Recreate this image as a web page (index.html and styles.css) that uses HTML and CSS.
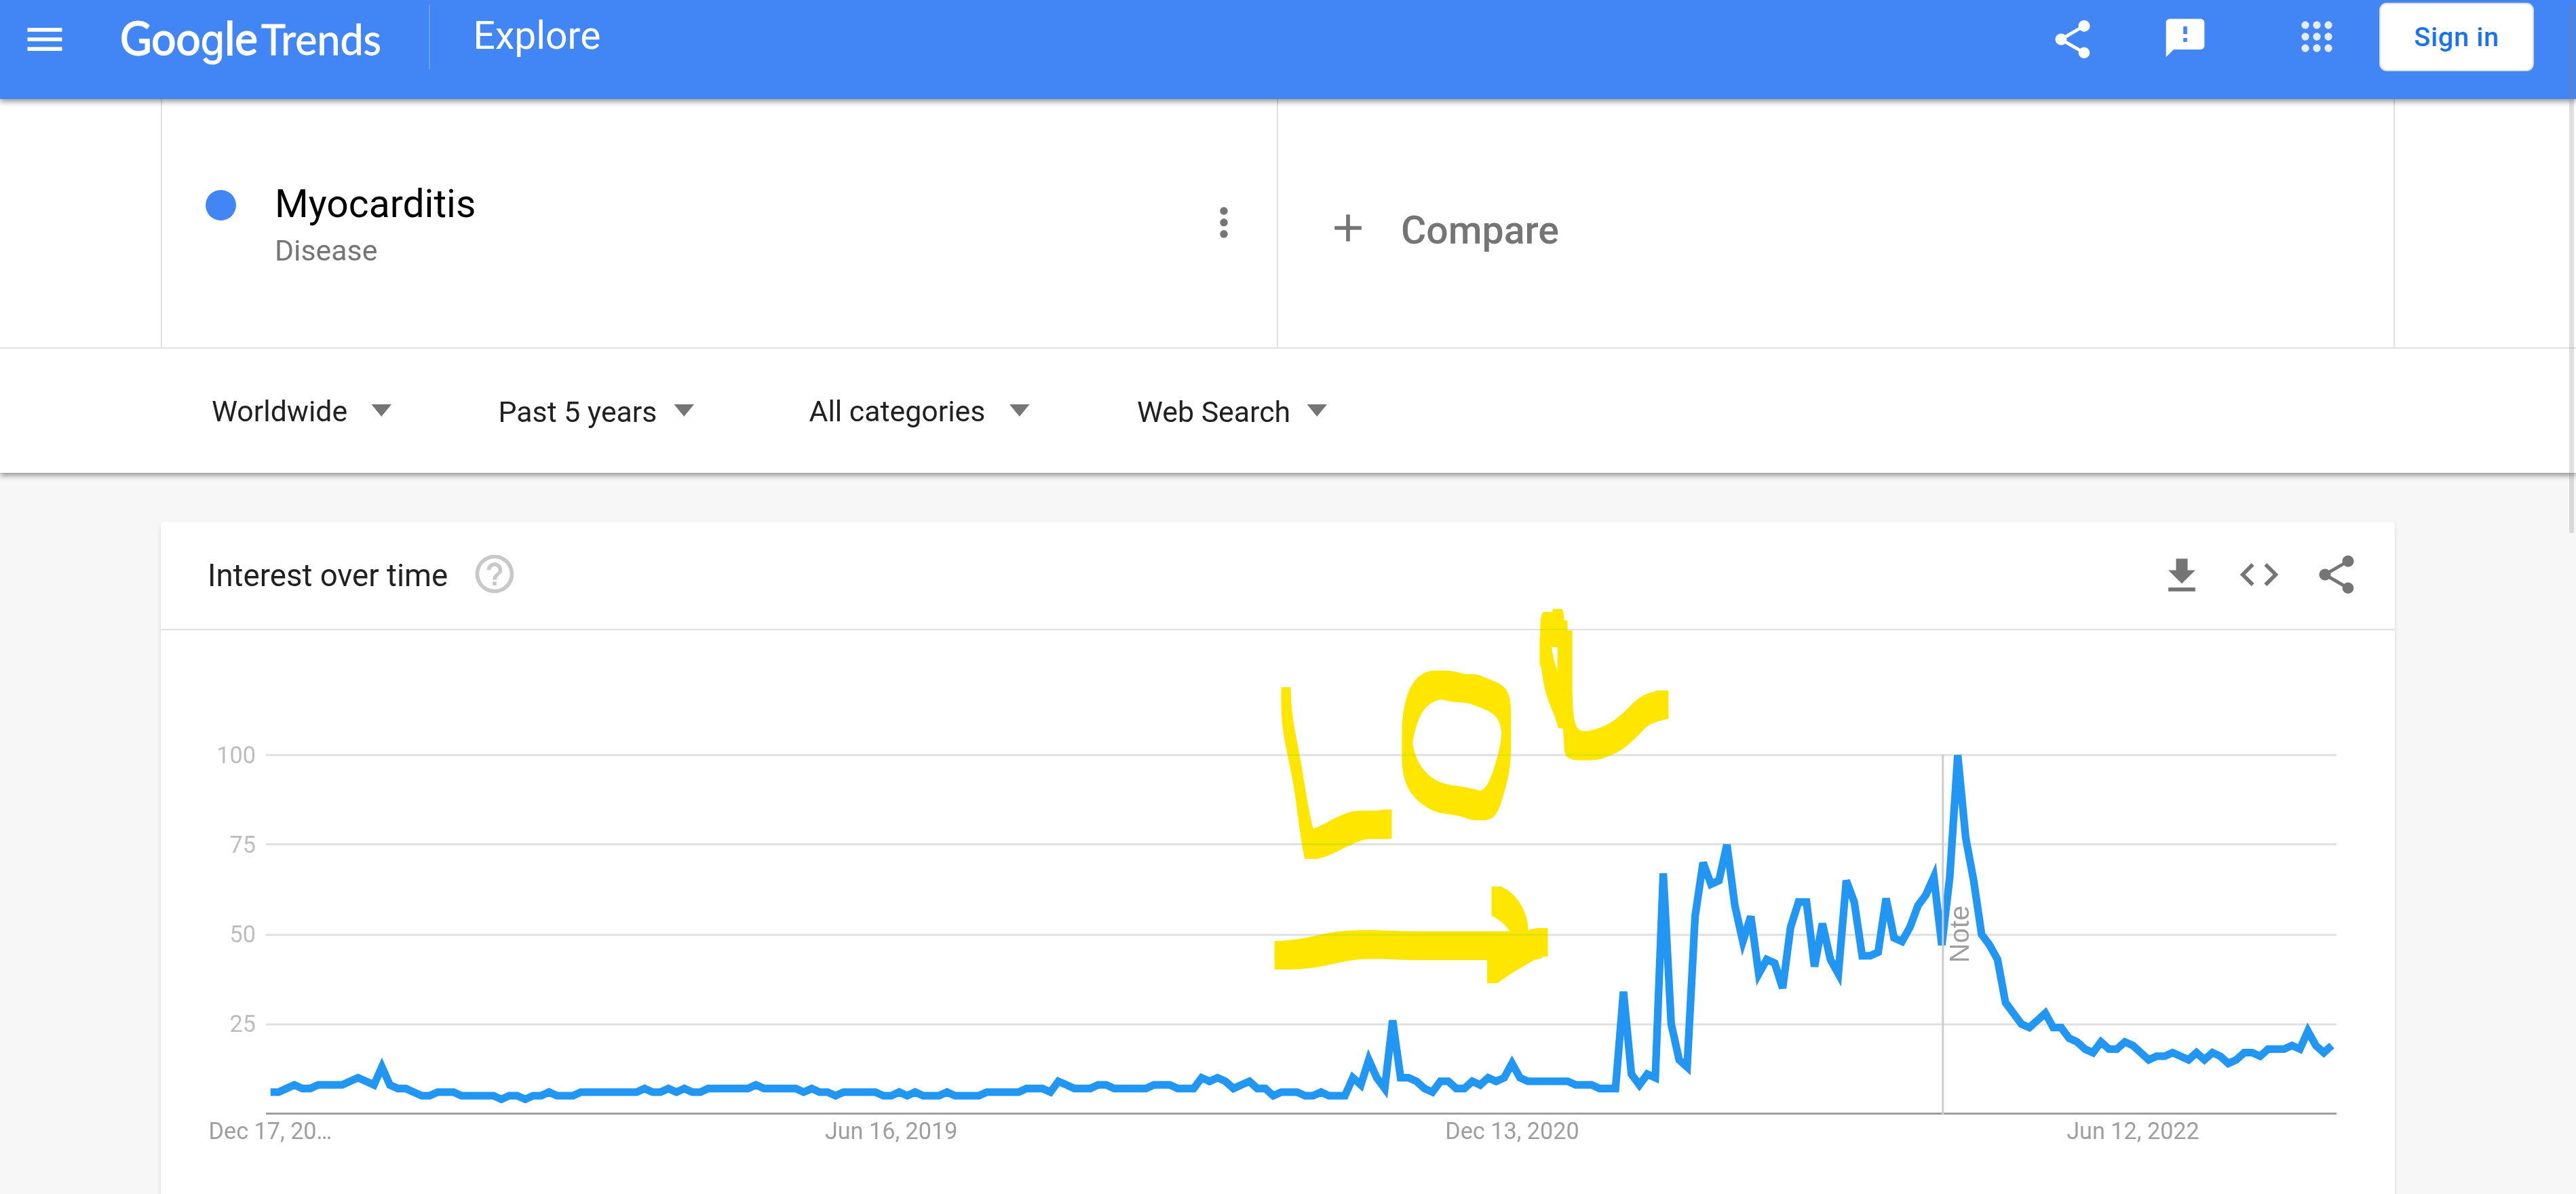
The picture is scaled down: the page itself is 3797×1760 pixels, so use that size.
FILE: index.html
```
<!DOCTYPE html>
<html lang="en">
<head>
<meta charset="utf-8">
<title>Myocarditis - Explore - Google Trends</title>
<link rel="stylesheet" href="styles.css">
</head>
<body>
<header class="topbar">
  <svg class="icon menu" viewBox="0 0 24 24"><path d="M3 18h18v-2H3v2zm0-5h18v-2H3v2zm0-7v2h18V6H3z"/></svg>
  <svg class="logo" viewBox="0 -15 400 120">
    <text class="logo-google" x="0" y="66" textLength="203" lengthAdjust="spacingAndGlyphs">Goo<tspan class="logo-g">g</tspan>le</text>
    <text class="logo-trends" x="208" y="66" textLength="177" lengthAdjust="spacingAndGlyphs">Trends</text>
  </svg>
  <div class="topbar-rule"></div>
  <div class="page-name">Explore</div>
  <div class="topbar-actions">
    <svg class="icon share-top" viewBox="0 0 24 24"><path d="M18 16.08c-.76 0-1.44.3-1.96.77L8.91 12.7c.05-.23.09-.46.09-.7s-.04-.47-.09-.7l7.05-4.11c.54.5 1.25.81 2.04.81 1.66 0 3-1.34 3-3s-1.34-3-3-3-3 1.34-3 3c0 .24.04.47.09.7L8.04 9.81C7.5 9.31 6.79 9 6 9c-1.66 0-3 1.34-3 3s1.34 3 3 3c.79 0 1.5-.31 2.04-.81l7.12 4.16c-.05.21-.08.43-.08.65 0 1.61 1.31 2.92 2.92 2.92s2.92-1.31 2.92-2.92-1.31-2.92-2.92-2.92z"/></svg>
    <svg class="icon feedback" viewBox="0 0 24 24"><path d="M20 2H4c-1.1 0-1.99.9-1.99 2L2 22l4-4h14c1.1 0 2-.9 2-2V4c0-1.1-.9-2-2-2zm-7 12h-2v-2h2v2zm0-4h-2V6h2v4z"/></svg>
    <svg class="icon apps" viewBox="0 0 24 24"><g><circle cx="6" cy="6" r="2"/><circle cx="12" cy="6" r="2"/><circle cx="18" cy="6" r="2"/><circle cx="6" cy="12" r="2"/><circle cx="12" cy="12" r="2"/><circle cx="18" cy="12" r="2"/><circle cx="6" cy="18" r="2"/><circle cx="12" cy="18" r="2"/><circle cx="18" cy="18" r="2"/></g></svg>
    <a class="sign-in">Sign in</a>
  </div>
</header>

<section class="query">
  <div class="terms">
    <div class="term">
      <span class="dot"></span>
      <div class="term-text">
        <div class="term-name">Myocarditis</div>
        <div class="term-kind">Disease</div>
      </div>
      <svg class="icon kebab" viewBox="0 0 24 24"><path d="M12 8c1.1 0 2-.9 2-2s-.9-2-2-2-2 .9-2 2 .9 2 2 2zm0 2c-1.1 0-2 .9-2 2s.9 2 2 2 2-.9 2-2-.9-2-2-2zm0 6c-1.1 0-2 .9-2 2s.9 2 2 2 2-.9 2-2-.9-2-2-2z"/></svg>
    </div>
    <div class="compare">
      <svg class="icon plus" viewBox="0 0 24 24"><path d="M19 13h-6v6h-2v-6H5v-2h6V5h2v6h6v2z"/></svg>
      <span class="compare-label">Compare</span>
    </div>
  </div>
  <nav class="filters">
    <div class="filter f-geo"><span>Worldwide</span><i class="caret"></i></div>
    <div class="filter f-time"><span>Past 5 years</span><i class="caret"></i></div>
    <div class="filter f-cat"><span>All categories</span><i class="caret"></i></div>
    <div class="filter f-type"><span>Web Search</span><i class="caret"></i></div>
  </nav>
</section>

<main class="card">
  <div class="card-head">
    <h2>Interest over time</h2>
    <svg class="icon help" viewBox="0 0 24 24"><path d="M11 18h2v-2h-2v2zm1-16C6.480 2 2 6.480 2 12s4.480 10 10 10 10-4.480 10-10S17.520 2 12 2zm0 18c-4.410 0-8-3.590-8-8s3.590-8 8-8 8 3.590 8 8-3.590 8-8 8zm0-14c-2.210 0-4 1.790-4 4h2c0-1.100.9-2 2-2s2 .9 2 2c0 2-3 1.750-3 5h2c0-2.250 3-2.500 3-5 0-2.210-1.790-4-4-4z"/></svg>
    <div class="card-tools">
      <svg class="icon download" viewBox="0 0 24 24"><path d="M19 9h-4V3H9v6H5l7 7 7-7zM5 18v2h14v-2H5z"/></svg>
      <svg class="icon embed" viewBox="0 0 24 24"><path d="M9.400 16.600L4.800 12l4.600-4.600L8 6l-6 6 6 6 1.400-1.400zm5.200 0l4.600-4.600-4.600-4.600L16 6l6 6-6 6-1.400-1.400z"/></svg>
      <svg class="icon share-card" viewBox="0 0 24 24"><path d="M18 16.080c-.76 0-1.440.3-1.960.77L8.910 12.700c.05-.23.09-.46.09-.7s-.04-.47-.09-.7l7.050-4.110c.54.5 1.250.81 2.040.81 1.660 0 3-1.340 3-3s-1.340-3-3-3-3 1.340-3 3c0 .24.04.47.09.7L8.040 9.810C7.500 9.310 6.790 9 6 9c-1.660 0-3 1.340-3 3s1.340 3 3 3c.79 0 1.500-.31 2.040-.81l7.120 4.160c-.05.21-.08.43-.08.65 0 1.610 1.310 2.920 2.920 2.920s2.920-1.310 2.920-2.920-1.310-2.920-2.920-2.920z"/></svg>
    </div>
  </div>
  <svg class="chart" viewBox="237 929 3293 831">
    <g class="grid">
      <path d="M392 1113H3444M392 1244.500H3444M392 1378H3444M392 1510H3444"/>
    </g>
    <path class="axis" d="M392 1641.500H3444"/>
    <g class="y-labels">
      <text x="377" y="1124.500">100</text>
      <text x="377" y="1256.500">75</text>
      <text x="377" y="1389">50</text>
      <text x="377" y="1520.500">25</text>
    </g>
    <g class="x-labels">
      <text x="398.500" y="1679">Dec 17, 20…</text>
      <text x="1313.700" y="1679">Jun 16, 2019</text>
      <text x="2229" y="1679">Dec 13, 2020</text>
      <text x="3144" y="1679">Jun 12, 2022</text>
    </g>
    <!-- one point per week: week index, search interest -->
    <polyline class="series" transform="translate(398.7 1641.5) scale(11.731 -5.285)" points="0,6 1,6 2,7 3,8 4,7 5,7 6,8 7,8 8,8 9,8 10,9 11,10 12,9 13,8 14,13 15,8 16,7 17,7 18,6 19,5 20,5 21,6 22,6 23,6 24,5 25,5 26,5 27,5 28,5 29,4 30,5 31,5 32,4 33,5 34,5 35,6 36,5 37,5 38,5 39,6 40,6 41,6 42,6 43,6 44,6 45,6 46,6 47,7 48,6 49,6 50,7 51,6 52,7 53,6 54,6 55,7 56,7 57,7 58,7 59,7 60,7 61,8 62,7 63,7 64,7 65,7 66,7 67,6 68,7 69,6 70,6 71,5 72,6 73,6 74,6 75,6 76,6 77,5 78,5 79,6 80,5 81,6 82,5 83,5 84,5 85,6 86,5 87,5 88,5 89,5 90,6 91,6 92,6 93,6 94,6 95,7 96,7 97,7 98,6 99,9 100,8 101,7 102,7 103,7 104,8 105,8 106,7 107,7 108,7 109,7 110,7 111,8 112,8 113,8 114,7 115,7 116,7 117,10 118,9 119,10 120,9 121,7 122,8 123,9 124,7 125,7 126,5 127,6 128,6 129,6 130,5 131,5 132,6 133,5 134,5 135,5 136,10 137,8 138,15 139,10 140,7 141,26 142,10 143,10 144,9 145,7 146,6 147,9 148,9 149,7 150,7 151,9 152,8 153,10 154,9 155,10 156,14 157,10 158,9 159,9 160,9 161,9 162,9 163,9 164,8 165,8 166,8 167,7 168,7 169,7 170,34 171,11 172,8 173,11 174,10 175,67 176,25 177,15 178,13 179,55 180,70 181,64 182,65 183,75 184,58 185,48 186,55 187,39 188,43 189,42 190,35 191,52 192,59 193,59 194,41 195,53 196,43 197,39 198,65 199,59 200,44 201,44 202,45 203,60 204,49 205,48 206,52 207,58 208,61 209,66 210,47 211,66 212,100 213,77 214,65 215,50 216,47 217,43 218,31 219,28 220,25 221,24 222,26 223,28 224,24 225,24 226,21 227,20 228,18 229,17 230,20 231,18 232,18 233,20 234,19 235,17 236,15 237,16 238,16 239,17 240,16 241,15 242,17 243,15 244,17 245,16 246,14 247,15 248,17 249,17 250,16 251,18 252,18 253,18 254,19 255,18 256,23 257,19 258,17 259,19"/>
    <path class="note-line" d="M2863.800 1112V1643"/>
    <text class="note" transform="translate(2902 1377) rotate(-90)">Note</text>
  </svg>
</main>

<!-- highlighter marks over the chart -->
<svg class="marker" viewBox="0 0 1568 1568" preserveAspectRatio="none">
  <path d="M93 387H127C128 500 145 560 160 650C180 765 188 840 207 914C260 895 310 847 378 847H435Q450 842 486 843V950Q475 953 465 953H404C345 960 280 1017 220 1027H176C155 920 148 800 125 690C105 580 93 540 93 440Z"/>
  <path fill-rule="evenodd" d="M522 540C526 440 552 326 640 325H685C715 327 735 338 755 338H772C800 338 815 350 855 367C895 385 909 410 910 480V600C909 680 905 715 880 800C865 855 850 882 815 883H785C755 882 745 868 705 863C670 857 645 858 610 834C550 795 523 740 522 655ZM560 595C575 690 625 733 680 748C720 757 755 757 798 773C825 767 838 724 850 687C865 637 874 600 876 560C873 490 840 477 765 449C740 441 725 448 665 433Q650 433 648 436C590 455 573 520 560 595Z"/>
  <path fill-rule="evenodd" d="M1058 106V95H1090Q1098 102 1099 138H1111V175H1128V390C1130 490 1132 551 1170 551C1250 543 1295 500 1350 440Q1380 411 1424 402V399H1470V505Q1410 515 1385 542C1340 590 1300 640 1212 658Q1165 661 1130 657Q1103 651 1100 625L1095 540H1078C1060 460 1034 455 1018 315L1012 302V197H1014C1014 150 1014 107 1028 106ZM1054 234C1058 265 1064 295 1075 325V238H1060Z"/>
  <path d="M69 1333C200 1331 240 1293 370 1293C440 1291 500 1297 580 1297H906Q882 1260 841 1238V1130H875C930 1155 972 1225 971 1294Q985 1286 1010 1285H1041V1391H1021V1396Q1010 1400 995 1403C950 1428 900 1461 862 1490H825V1404H560C480 1403 440 1396 370 1402C290 1410 230 1439 125 1439H69Z"/>
</svg>
<div class="scroll-thumb"></div>
</body>
</html>
```
FILE: styles.css
```
* { box-sizing: border-box; }

body {
  margin: 0;
  width: 3797px;
  height: 1760px;
  overflow: hidden;
  position: relative;
  background: #f7f7f7;
  font-family: Roboto, "Liberation Sans", sans-serif;
  color: #212121;
}

.icon {
  display: block;
  flex: none;
  width: 68px;
  height: 68px;
  fill: #757575;
}

/* top bar */
.topbar {
  position: relative;
  z-index: 2;
  display: flex;
  align-items: flex-start;
  height: 146px;
  background: #4285f4;
  box-shadow: 0 4px 8px rgba(0, 0, 0, 0.4);
  color: #fff;
}
.topbar .icon { fill: #fff; }
.menu { margin: 24px 0 0 32px; }
.logo {
  flex: none;
  width: 400px;
  height: 120px;
  margin: 0 0 0 77px;
  fill: #fff;
  stroke: #fff;
  font-family: Lato, "Open Sans", sans-serif;
}
.logo-google { font-size: 68px; stroke-width: 1.8px; }
.logo-g { font-family: Inter, Roboto, sans-serif; font-size: 62px; stroke-width: 1px; }
.logo-trends { font-size: 61px; stroke-width: 0.8px; }
.topbar-rule {
  width: 2px;
  height: 95px;
  margin: 7px 0 0 55px;
  background: #689df6;
}
.page-name {
  margin: 20px 0 0 63.5px;
  font-size: 57px;
  line-height: 66px;
}
.topbar-actions {
  display: flex;
  align-items: flex-start;
  margin: 0 62px 0 auto;
}
.share-top { margin-top: 24px; }
.feedback { margin: 22px 0 0 98px; }
.topbar .apps { margin: 20px 0 0 126px; fill: #e5edfd; }
.sign-in {
  width: 228px;
  height: 101px;
  margin: 4px 0 0 58px;
  border: 2px solid #dadce0;
  border-radius: 11px;
  background: #fff;
  color: #1a73e8;
  font-size: 39.6px;
  font-weight: 500;
  letter-spacing: 0.7px;
  line-height: 97px;
  text-align: center;
}

/* search terms and filters */
.query {
  position: relative;
  z-index: 1;
  height: 551px;
  background: #fff;
  box-shadow: 0 4px 8px rgba(0, 0, 0, 0.4);
}
.terms {
  display: flex;
  height: 368px;
  padding: 0 267px 0 237px;
  border-bottom: 2px solid #e0e0e0;
}
.term, .compare {
  display: flex;
  align-items: flex-start;
  border-left: 2px solid #e0e0e0;
}
.term { width: 1645px; }
.compare { flex: 1; border-right: 2px solid #e0e0e0; }
.dot {
  width: 45px;
  height: 45px;
  margin: 134px 0 0 64px;
  border-radius: 50%;
  background: #4285f4;
}
.term-text { margin: 122px 0 0 57px; }
.term-name { font-size: 57px; line-height: 66px; color: #000; }
.term-kind { margin-top: 10px; font-size: 42.8px; line-height: 50px; color: #757575; }
.kebab { margin: 148px 44px 0 auto; }
.plus { margin: 156px 0 0 69px; }
.compare-label {
  margin: 161px 0 0 44px;
  font-size: 57.2px;
  font-weight: 500;
  line-height: 66px;
  color: #757575;
}
.filters {
  display: flex;
  align-items: flex-start;
  padding: 67px 0 0 312px;
  font-size: 42.8px;
  line-height: 50px;
}
.filter { display: flex; justify-content: space-between; white-space: nowrap; }
.f-geo { width: 265px; }
.f-time { width: 288.5px; margin: 1px 0 0 157.5px; }
.f-cat { width: 325px; margin-left: 169.5px; }
.f-type { width: 280px; margin: 1px 0 0 158.5px; }
.caret {
  width: 29.5px;
  height: 18px;
  margin-top: 15px;
  background: #757575;
  clip-path: polygon(0 0, 100% 0, 50% 100%);
}
.f-time .caret, .f-type .caret { margin-top: 14px; }

/* chart card */
.card {
  width: 3293px;
  height: 1020px;
  margin: 72px 0 0 237px;
  border-radius: 6px;
  background: #fff;
  box-shadow: 0 3px 6px rgba(0, 0, 0, 0.12);
}
.card-head {
  display: flex;
  align-items: flex-start;
  height: 160px;
  border-bottom: 2px solid #e0e0e0;
}
.card-head h2 {
  margin: 54px 0 0 69px;
  font-size: 45.6px;
  font-weight: 400;
  line-height: 51px;
}
.help { margin: 43px 0 0 35px; fill: #c8c8c8; }
.card-tools { display: flex; align-items: flex-start; margin: 44px 52px 0 auto; }
.download { margin-top: 2px; }
.embed { margin-left: 46px; }
.share-card { margin-left: 46px; }

.chart { display: block; width: 3293px; height: 831px; }
.grid { stroke: #e0e0e0; stroke-width: 3px; fill: none; }
.axis { stroke: #9e9e9e; stroke-width: 3px; }
.y-labels { fill: #bdbdbd; font-size: 34.2px; text-anchor: end; }
.x-labels { fill: #9e9e9e; font-size: 34.2px; text-anchor: middle; }
.series {
  fill: none;
  stroke: #2196f3;
  stroke-width: 11.3px;
  stroke-miterlimit: 4;
  vector-effect: non-scaling-stroke;
}
.note-line { stroke: #ccc; stroke-width: 3px; }
.note {
  fill: #9e9e9e;
  font-family: "Liberation Sans", sans-serif;
  font-size: 40px;
  text-anchor: middle;
}

/* overlays */
.marker {
  position: absolute;
  left: 1850px;
  top: 860px;
  width: 650px;
  height: 620px;
  fill: #ffe600;
  mix-blend-mode: darken;
}
.scroll-thumb {
  position: absolute;
  z-index: 3;
  left: 3787px;
  top: 5px;
  width: 7px;
  height: 781px;
  border-radius: 4px;
  background: rgba(128, 128, 128, 0.25);
}
```
